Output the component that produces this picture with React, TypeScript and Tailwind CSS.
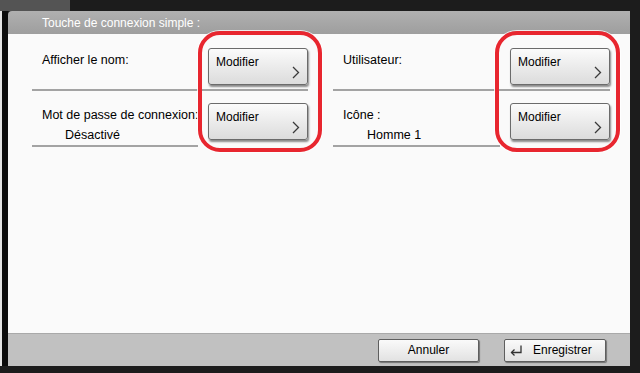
import React from 'react';

const font = { fontFamily: '"Liberation Sans", Arial, sans-serif' };

function Chevron() {
  return (
    <svg width="8" height="13" viewBox="0 0 8 13" className="absolute right-[7px] bottom-[5px]">
      <polyline points="1,1 6.5,6.5 1,12" fill="none" stroke="#3a3a3a" strokeWidth="1.3" />
    </svg>
  );
}

function EditButton() {
  return (
    <div className="relative w-[100px] h-[37px] shrink-0 rounded-[3px] border border-[#6b6b6b] bg-gradient-to-b from-[#fbfbfb] to-[#dcdcdc] shadow-[1px_2px_2px_rgba(0,0,0,0.45)]">
      <span className="absolute left-[7px] top-[5px] text-[12px] leading-[16px] text-black">Modifier</span>
      <Chevron />
    </div>
  );
}

function ReturnIcon() {
  return (
    <svg width="14" height="13" viewBox="0 0 14 13">
      <path d="M12 1.5 V8.5 H2.5" fill="none" stroke="#333" strokeWidth="1.3" />
      <polyline points="5.5,5.5 2.5,8.5 5.5,11.5" fill="none" stroke="#333" strokeWidth="1.3" />
    </svg>
  );
}

function FooterButton({ children, w }: { children: React.ReactNode; w: string }) {
  return (
    <div className={`${w} h-[23px] rounded-[2px] border border-[#5e5e5e] bg-gradient-to-b from-[#fafafa] to-[#e2e2e2] shadow-[1px_1px_1px_rgba(0,0,0,0.4)] flex items-center text-[12px] text-black`}>
      {children}
    </div>
  );
}

export default function App() {
  return (
    <div className="w-[640px] h-[373px] bg-[#1c1c1c] flex flex-col overflow-hidden" style={font}>
      <div className="h-[11px] shrink-0 flex">
        <div className="w-[70px] bg-[#545454]" />
      </div>

      <div className="flex flex-1 min-h-0">
        <div className="w-[8px] border-l-2 border-[#e4e4e4] bg-[#0c0c0c]" />

        <div className="relative w-[622px] flex flex-col rounded-tl-[4px]">
          <div className="h-[23px] shrink-0 flex items-center pl-[34px] bg-gradient-to-b from-[#b0b0b0] to-[#9e9e9e] rounded-tl-[4px] text-white text-[12px]">
            Touche de connexion simple :
          </div>

          <div className="flex-1 bg-[#fafafa] flex pt-[14px]">
            {/* left column */}
            <div className="ml-[24px] w-[276px]">
              <div className="flex border-b-2 border-[#a3a3a3] pb-[4px]">
                <div className="w-[176px] pl-[10px] pt-[4px] text-[12.5px] leading-[16px] text-black">Afficher le nom:</div>
                <EditButton />
              </div>
              <div className="flex mt-[12px]">
                <div className="w-[166px] h-[44px] border-b-2 border-[#a3a3a3] pl-[10px] pt-[4px] text-[12.5px] leading-[16px] text-black whitespace-nowrap">
                  <div>Mot de passe de connexion:</div>
                  <div className="pl-[23px] mt-[4px]">Désactivé</div>
                </div>
                <div className="ml-[10px]">
                  <EditButton />
                </div>
              </div>
            </div>

            {/* right column */}
            <div className="ml-[25px] w-[277px]">
              <div className="flex border-b-2 border-[#a3a3a3] pb-[4px]">
                <div className="w-[177px] pl-[10px] pt-[4px] text-[12.5px] leading-[16px] text-black">Utilisateur:</div>
                <EditButton />
              </div>
              <div className="flex mt-[12px]">
                <div className="w-[167px] h-[44px] border-b-2 border-[#a3a3a3] pl-[10px] pt-[4px] text-[12.5px] leading-[16px] text-black">
                  <div>Icône :</div>
                  <div className="pl-[24px] mt-[4px]">Homme 1</div>
                </div>
                <div className="ml-[10px]">
                  <EditButton />
                </div>
              </div>
            </div>
          </div>

          <div className="h-[33px] shrink-0 bg-[#c1c1c1] border-t border-[#a9a9a9] flex items-center justify-end pr-[24px] gap-[25px]">
            <FooterButton w="w-[101px]">
              <span className="w-full text-center">Annuler</span>
            </FooterButton>
            <FooterButton w="w-[102px]">
              <span className="ml-[4px] flex"><ReturnIcon /></span>
              <span className="ml-[10px]">Enregistrer</span>
            </FooterButton>
          </div>

          {/* highlight callouts */}
          <div className="absolute left-[190px] top-[20px] w-[124px] h-[121px] rounded-[22px] border-[4px] border-[#e8262f] shadow-[0_0_0_1px_rgba(255,255,255,0.8)]" />
          <div className="absolute left-[487px] top-[20px] w-[125px] h-[121px] rounded-[22px] border-[4px] border-[#e8262f] shadow-[0_0_0_1px_rgba(255,255,255,0.8)]" />
        </div>

        <div className="flex-1" />
      </div>

      <div className="h-[7px] shrink-0" />
    </div>
  );
}
